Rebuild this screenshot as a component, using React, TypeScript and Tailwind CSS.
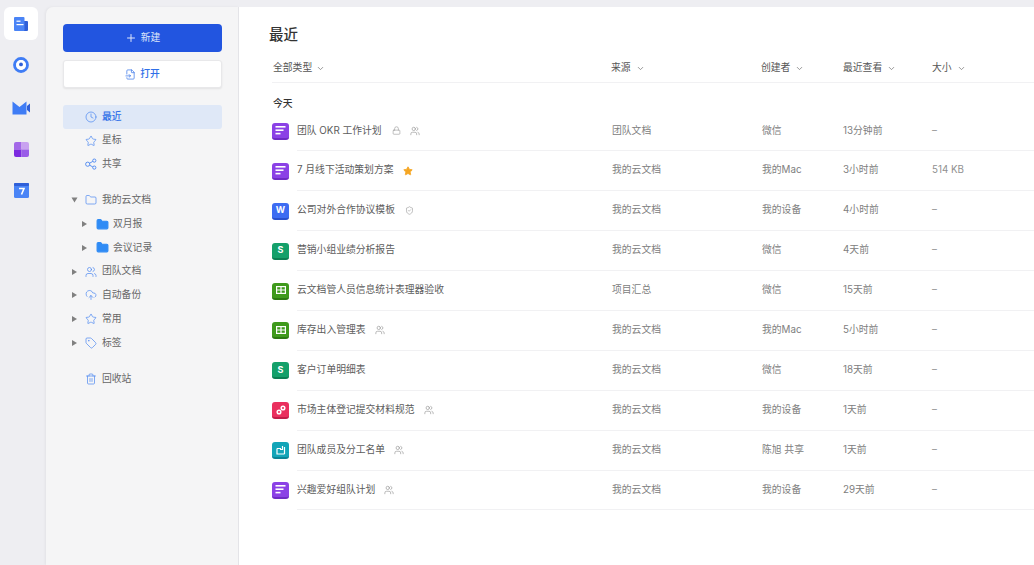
import { ChevronDown, Clock, CloudUpload, FileInput, Folder, Lock, Plus, ShieldCheck, Star, Tag, Trash2, Users } from "lucide-react";

type DocKind = "doc" | "word" | "sheet" | "table" | "link" | "form";

const ROWS: { kind: DocKind; name: string; flags?: ("lock" | "team" | "star" | "shield")[]; source: string; creator: string; viewed: string; size: string }[] = [
  { kind: "doc", name: "团队 OKR 工作计划", flags: ["lock", "team"], source: "团队文档", creator: "微信", viewed: "13分钟前", size: "–" },
  { kind: "doc", name: "7 月线下活动策划方案", flags: ["star"], source: "我的云文档", creator: "我的Mac", viewed: "3小时前", size: "514 KB" },
  { kind: "word", name: "公司对外合作协议模板", flags: ["shield"], source: "我的云文档", creator: "我的设备", viewed: "4小时前", size: "–" },
  { kind: "sheet", name: "营销小组业绩分析报告", source: "我的云文档", creator: "微信", viewed: "4天前", size: "–" },
  { kind: "table", name: "云文档管人员信息统计表理器验收", source: "项目汇总", creator: "微信", viewed: "15天前", size: "–" },
  { kind: "table", name: "库存出入管理表", flags: ["team"], source: "我的云文档", creator: "我的Mac", viewed: "5小时前", size: "–" },
  { kind: "sheet", name: "客户订单明细表", source: "我的云文档", creator: "微信", viewed: "18天前", size: "–" },
  { kind: "link", name: "市场主体登记提交材料规范", flags: ["team"], source: "我的云文档", creator: "我的设备", viewed: "1天前", size: "–" },
  { kind: "form", name: "团队成员及分工名单", flags: ["team"], source: "我的云文档", creator: "陈旭 共享", viewed: "1天前", size: "–" },
  { kind: "doc", name: "兴趣爱好组队计划", flags: ["team"], source: "我的云文档", creator: "我的设备", viewed: "29天前", size: "–" },
];

const COLUMNS = [
  { label: "来源", width: "w-[150px]" },
  { label: "创建者", width: "w-[82px]" },
  { label: "最近查看", width: "w-[89px]" },
  { label: "大小", width: "w-[60px]" },
];

function DocIcon({ kind }: { kind: DocKind }) {
  const tone: Record<DocKind, string> = {
    doc: "bg-[#8b41e6] border-[#6f2cc4]",
    word: "bg-[#3d6cf2] border-[#2a50cc]",
    sheet: "bg-[#14a06a] border-[#0c7e52]",
    table: "bg-[#3f9a1c] border-[#2c7a10]",
    link: "bg-[#ea2f5e] border-[#c11d49]",
    form: "bg-[#12a5b8] border-[#0b8496]",
  };
  return (
    <span className={`flex h-[17px] w-[17px] shrink-0 items-center justify-center rounded-[3px] border-b-2 text-[9px] font-bold text-white ${tone[kind]}`}>
      {kind === "word" && "W"}
      {kind === "sheet" && "S"}
      {kind === "doc" && (
        <svg viewBox="0 0 11 9" className="h-[9px] w-[11px]" fill="#fff">
          <rect x="0.5" y="0" width="10" height="1.6" />
          <rect x="0.5" y="3.4" width="8" height="1.6" />
          <rect x="0.5" y="6.8" width="5" height="1.6" />
        </svg>
      )}
      {kind === "table" && (
        <svg viewBox="0 0 10 8" className="h-[8px] w-[10px]" fill="none" stroke="#fff" strokeWidth="1.2">
          <rect x="0.6" y="0.6" width="8.8" height="6.8" />
          <path d="M5 0.6v6.8M0.6 4h8.8" />
        </svg>
      )}
      {kind === "link" && (
        <svg viewBox="0 0 10 10" className="h-[10px] w-[10px]" fill="none" stroke="#fff" strokeWidth="1.5">
          <circle cx="3" cy="7" r="1.8" />
          <circle cx="7" cy="3" r="1.8" />
        </svg>
      )}
      {kind === "form" && (
        <svg viewBox="0 0 10 10" className="h-[10px] w-[10px]" fill="none" stroke="#fff" strokeWidth="1.2">
          <path d="M1 3.5v5.5h7.5M1 3.5h4M6.5 1v3.5h-2.5M8.5 9V2" />
        </svg>
      )}
    </span>
  );
}

function Flag({ type }: { type: "lock" | "team" | "star" | "shield" }) {
  if (type === "star") return <Star className="ml-[1px] h-[10px] w-[10px] fill-[#f5a623] text-[#f5a623]" />;
  if (type === "lock") return <Lock className="ml-[1px] h-[9px] w-[9px] text-[#8a8a8a]" strokeWidth={1.4} />;
  if (type === "shield") return <ShieldCheck className="ml-[1px] h-[9px] w-[9px] text-[#8a8a8a]" strokeWidth={1.4} />;
  return <Users className="h-[10px] w-[10px] text-[#8a8a8a]" strokeWidth={1.4} />;
}

function Caret({ open }: { open?: boolean }) {
  return <span className={`h-0 w-0 border-y-[3px] border-l-[5px] border-y-transparent border-l-[#808080] ${open ? "rotate-90" : ""}`} />;
}

function NavRow({ icon, label, active, caret, open }: { icon: React.ReactNode; label: string; active?: boolean; caret?: boolean; open?: boolean }) {
  return (
    <div className={`flex h-[23.8px] items-center rounded-[3px] ${active ? "bg-[#dfe8f7] font-medium text-[#2f6fe8]" : "text-[#666]"}`}>
      <span className="flex w-[21px] shrink-0 justify-center pl-[1px]">{caret && <Caret open={open} />}</span>
      <span className="ml-[1px] flex w-[17px] justify-start text-[#4a86f0]">{icon}</span>
      <span>{label}</span>
    </div>
  );
}

function SubRow({ label }: { label: string }) {
  return (
    <div className="flex h-[23.8px] items-center text-[#666]">
      <span className="flex w-[33px] justify-center pl-[9px]"><Caret /></span>
      <Folder className="h-[13px] w-[13px] fill-[#2f8bf5] text-[#2f8bf5]" />
      <span className="ml-[4px]">{label}</span>
    </div>
  );
}

const iconClass = "h-[12px] w-[12px]";

export default function App() {
  return (
    <div className="flex h-[565px] w-[1034px] overflow-hidden bg-[#eeeef2] pt-[7px] text-[9.8px] font-['Inter','Noto_Sans_CJK_SC',sans-serif]">
      <nav className="flex w-[46px] shrink-0 flex-col items-center pr-[4px]">
        <div className="flex h-[33px] w-[34px] items-center justify-center rounded-[6px] bg-white">
          <svg viewBox="0 0 16 16" className="h-[16px] w-[16px]">
            <rect x="10" y="5" width="5" height="10" rx="1" fill="#2f5fd8" />
            <rect x="1" y="1" width="10.5" height="14" rx="1" fill="#4a84f6" />
            <rect x="3.5" y="4.6" width="4" height="1.2" fill="#fff" />
            <rect x="3.5" y="8" width="7" height="1.2" fill="#fff" />
          </svg>
        </div>
        <svg viewBox="0 0 16 16" className="mt-[17px] h-[16px] w-[16px]">
          <circle cx="8" cy="8" r="6.4" fill="none" stroke="#3f7cf5" strokeWidth="3" />
          <circle cx="8" cy="8" r="4.9" fill="#fff" />
          <circle cx="8" cy="7.4" r="1.9" fill="#2f5fd8" />
        </svg>
        <svg viewBox="0 0 18 14" className="mt-[28px] h-[14px] w-[18px]">
          <path d="M0.5 0.5l7 5.5 7-5.5v13h-14z" fill="#3f7cf5" />
          <path d="M15 5l3-2.5v9l-3-2.5z" fill="#2f5fd8" />
        </svg>
        <svg viewBox="0 0 15 15" className="mt-[27px] h-[15px] w-[15px]">
          <path d="M2 0h5.5v7.5H0V2a2 2 0 0 1 2-2z" fill="#a368e8" />
          <path d="M7.5 0H13a2 2 0 0 1 2 2v5.5H7.5z" fill="#c9a2f0" />
          <path d="M0 7.5h7.5V15H2a2 2 0 0 1-2-2z" fill="#7c2ae0" />
          <path d="M7.5 7.5H15V13a2 2 0 0 1-2 2H7.5z" fill="#9a5ce8" />
        </svg>
        <svg viewBox="0 0 15 15" className="mt-[26px] h-[15px] w-[15px]">
          <rect width="15" height="15" rx="1.5" fill="#4a84f6" />
          <rect width="15" height="3" rx="1" fill="#2f5fd8" />
          <path d="M5 5.5h5L7.5 11.5" fill="none" stroke="#fff" strokeWidth="1.6" />
        </svg>
      </nav>

      <aside className="w-[193px] shrink-0 rounded-tl-[7px] border-r border-[#e4e4e8] bg-[#f5f5f6] pl-[17px] pr-[16px] pt-[17px] shadow-[-1px_0_3px_rgba(0,0,0,0.05)]">
        <button className="flex h-[28px] w-full items-center justify-center gap-[4px] rounded-[4px] bg-[#2255e0] text-[#dfe6fa]">
          <Plus className="h-[12px] w-[12px]" />
          新建
        </button>
        <button className="mt-[8px] flex h-[28px] w-full items-center justify-center gap-[4px] rounded-[3px] border border-[#e8e8ea] bg-white font-medium text-[#2f6fe8] shadow-[0_1px_2px_rgba(0,0,0,0.08)]">
          <FileInput className="h-[11px] w-[11px]" strokeWidth={1.5} />
          打开
        </button>

        <div className="mt-[17px]">
          <NavRow active icon={<Clock className={iconClass} strokeWidth={1.4} />} label="最近" />
          <NavRow icon={<Star className={iconClass} strokeWidth={1.4} />} label="星标" />
          <NavRow
            icon={
              <svg viewBox="0 0 12 12" className={iconClass} fill="none" stroke="currentColor" strokeWidth="0.9">
                <circle cx="2.7" cy="6.2" r="2.1" />
                <circle cx="9.3" cy="2.6" r="1.6" />
                <circle cx="9.3" cy="9.6" r="1.6" />
                <path d="M4.6 5.2l3.2-1.8M4.6 7.2l3.2 1.7" />
              </svg>
            }
            label="共享"
          />
        </div>
        <div className="mt-[12px]">
          <NavRow caret open icon={<Folder className={iconClass} strokeWidth={1.4} />} label="我的云文档" />
          <SubRow label="双月报" />
          <SubRow label="会议记录" />
          <NavRow caret icon={<Users className={iconClass} strokeWidth={1.4} />} label="团队文档" />
          <NavRow caret icon={<CloudUpload className={iconClass} strokeWidth={1.4} />} label="自动备份" />
          <NavRow caret icon={<Star className={iconClass} strokeWidth={1.4} />} label="常用" />
          <NavRow caret icon={<Tag className={iconClass} strokeWidth={1.4} />} label="标签" />
        </div>
        <div className="mt-[12px]">
          <NavRow icon={<Trash2 className={iconClass} strokeWidth={1.4} />} label="回收站" />
        </div>
      </aside>

      <main className="min-w-0 flex-1 bg-white pl-[33px] pt-[18px] text-[#808080]">
        <h1 className="-ml-[3px] mt-[1px] text-[14.5px] font-medium leading-[18px] text-[#333]">最近</h1>

        <div className="mt-[10px] flex h-[29px] items-center border-b border-[#f1f1f3] pl-[1px] text-[#555]">
          <span className="flex w-[338px] items-center gap-[4px]">
            全部类型 <ChevronDown className="h-[9px] w-[9px] text-[#777]" />
          </span>
          {COLUMNS.map((c) => (
            <span key={c.label} className={`flex items-center gap-[5px] ${c.width}`}>
              {c.label} <ChevronDown className="h-[9px] w-[9px] text-[#777]" />
            </span>
          ))}
        </div>

        <div className="mt-[14px] h-[14px] pl-[1px] font-medium leading-[14px] text-[#333]">今天</div>

        <div className="mt-[0.5px]">
          {ROWS.map((row) => (
            <div key={row.name} className="flex h-[39.9px] items-center">
              <span className="w-[25px] shrink-0"><DocIcon kind={row.kind} /></span>
              <div className="flex h-full min-w-0 flex-1 items-center border-b border-[#f1f1f3]">
                <span className="flex w-[315px] items-center gap-[9px] text-[#5c5c5c]">
                  {row.name}
                  {row.flags?.map((f) => <Flag key={f} type={f} />)}
                </span>
                <span className="w-[150px]">{row.source}</span>
                <span className="w-[81px]">{row.creator}</span>
                <span className="w-[89px]">{row.viewed}</span>
                <span className="text-[#909090]">{row.size}</span>
              </div>
            </div>
          ))}
        </div>
      </main>
    </div>
  );
}
